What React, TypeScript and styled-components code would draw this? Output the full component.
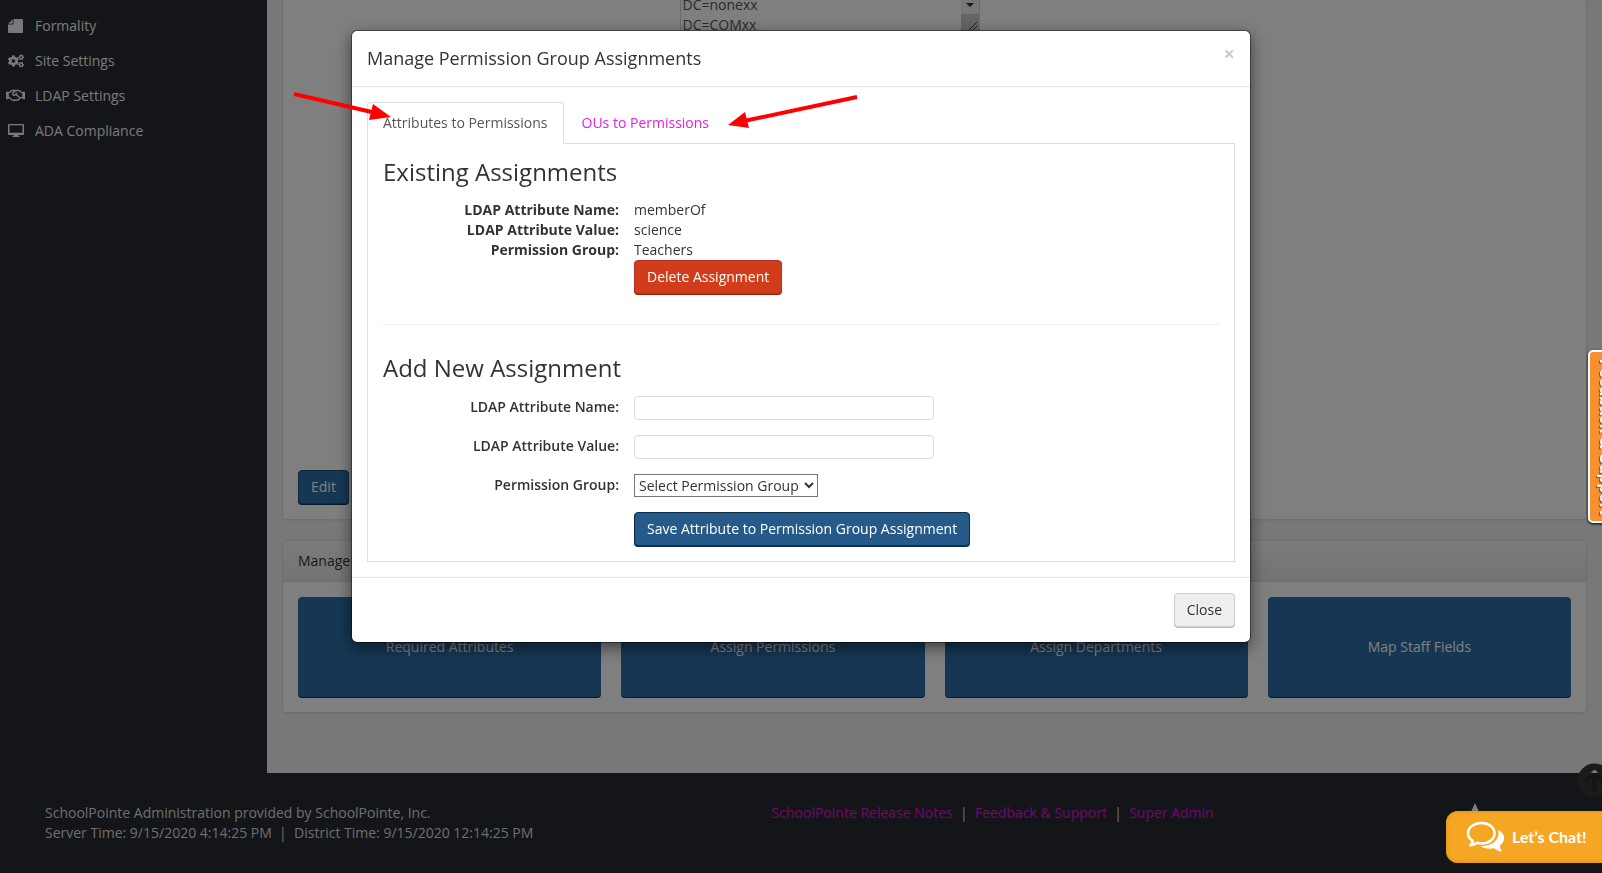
import React from "react";
import styled, { createGlobalStyle, css } from "styled-components";
import { FaCogs, FaRegHandshake, FaArrowCircleUp } from "react-icons/fa";

const GlobalStyle = createGlobalStyle`
  *, *::before, *::after { box-sizing: border-box; }
  html { overflow: hidden; }
  body {
    margin: 0;
    font: 14px/20px "Open Sans", "Noto Sans", sans-serif;
    color: #333;
    background: #272a30;
  }
  button, input, select, textarea { font: inherit; }
`;

const Page = styled.div`
  display: flex;
  flex-direction: column;
  min-height: 100vh;
`;

const Columns = styled.div`
  display: flex;
  flex: 1;
`;

const Sidebar = styled.nav`
  flex: 0 0 267px;
  padding-top: 8px;
  background: #272a30;
`;

const NavLink = styled.a`
  display: flex;
  align-items: center;
  gap: 10px;
  height: 35px;
  padding-left: 6px;
  color: #f2f2f2;
  text-decoration: none;
`;

const NavIcon = styled.span`
  display: flex;
  justify-content: center;
  width: 19px;
`;

const Main = styled.main`
  flex: 1;
  display: flex;
  flex-direction: column;
  gap: 20px;
  padding: 0 15px 60px;
  background: #f0f0f0;
`;

const Card = styled.section<{ $open?: boolean }>`
  border: 1px solid #dedede;
  border-radius: 4px;
  background: #fff;
  box-shadow: 0 1px 1px rgba(0, 0, 0, 0.05);
  ${(p) =>
    p.$open &&
    css`
      flex: 1;
      display: flex;
      flex-direction: column;
      justify-content: space-between;
      align-items: flex-start;
      padding: 0 15px 15px;
      border-top: 0;
      border-radius: 0 0 4px 4px;
    `}
`;

const CardHeader = styled.header`
  padding: 10px 15px;
  border-bottom: 1px solid #dedede;
  background: linear-gradient(#f8f8f8, #e6e6e6);
`;

const TileGrid = styled.div`
  display: grid;
  grid-template-columns: repeat(4, 1fr);
  gap: 20px;
  padding: 15px;
`;

const tones = {
  primary: ["#2c6ea6", "#214f78", "#0b2f50", "#fff"],
  active: ["#265a88", "#0d2d4a", "#0b2f50", "#fff"],
  danger: ["#d13c1a", "#b92c28", "#a02008", "#fff"],
  plain: ["#eee", "#ccc", "#c2c2c2", "#333"],
};

const Button = styled.button<{ $tone: keyof typeof tones }>`
  padding: 6px 12px;
  border: 1px solid ${(p) => tones[p.$tone][1]};
  border-radius: 4px;
  background: ${(p) => tones[p.$tone][0]};
  box-shadow: 0 1px 0 ${(p) => tones[p.$tone][2]};
  color: ${(p) => tones[p.$tone][3]};
  white-space: nowrap;
`;

const Tile = styled(Button)`
  height: 100px;
  border-color: #2c6ea6;
`;

const ValueBox = styled.div`
  display: flex;
  align-items: stretch;
  align-self: center;
  width: 300px;
  height: 32px;
  margin-right: 210px;
  border: 1px solid #d4d4d4;
  border-top: 0;
  overflow: hidden;
`;

const ValueText = styled.textarea`
  flex: 1;
  align-self: flex-end;
  height: 36px;
  padding: 0 2px;
  border: 0;
  background: transparent;
  color: #555;
  resize: none;
  overflow: hidden;
`;

const Footer = styled.footer`
  display: grid;
  grid-template-columns: 21fr 20fr 4fr;
  min-height: 100px;
  padding: 30px 0 30px 45px;
  color: #ddd;
  background: #272a30;
  white-space: pre-wrap;

  a {
    color: #e010d8;
    text-decoration: none;
  }
`;

const Overlay = styled.div`
  position: fixed;
  inset: 0;
  padding: 30px 0;
  background: rgba(0, 0, 0, 0.5);
`;

const Dialog = styled.div`
  position: relative;
  max-width: 900px;
  margin: 0 auto;
  border: 1px solid rgba(0, 0, 0, 0.4);
  border-radius: 6px;
  background: #fff;
  background-clip: padding-box;
  box-shadow: 0 5px 15px rgba(0, 0, 0, 0.5);
`;

const DialogHeader = styled.header`
  display: flex;
  justify-content: space-between;
  align-items: flex-start;
  padding: 15px;
  border-bottom: 1px solid #e5e5e5;
`;

const DialogTitle = styled.h4`
  margin: 0;
  font-size: 18px;
  font-weight: 400;
  line-height: 25px;
`;

const Dismiss = styled.button`
  padding: 0;
  border: 0;
  background: none;
  color: #ccc;
  font-size: 20px;
  font-weight: 700;
  line-height: 16px;
`;

const DialogBody = styled.div`
  padding: 15px;
`;

const TabList = styled.div`
  display: flex;
  gap: 2px;
  border-bottom: 1px solid #ddd;
`;

const Tab = styled.button<{ $active?: boolean }>`
  margin-bottom: -1px;
  padding: 10px 15px;
  border: 1px solid transparent;
  border-radius: 4px 4px 0 0;
  background: none;
  color: #e61ee0;
  ${(p) =>
    p.$active &&
    css`
      border-color: #ddd #ddd #fff;
      background: #fff;
      color: #555;
    `}
`;

const TabPane = styled.div`
  padding: 15px;
  border: 1px solid #ddd;
  border-top: 0;
`;

const SectionTitle = styled.h3`
  margin: 0 0 15px;
  font-size: 24px;
  font-weight: 400;
  line-height: 26px;
`;

const Details = styled.dl`
  display: grid;
  grid-template-columns: 236px 1fr;
  column-gap: 15px;
  margin: 0;

  dt {
    font-weight: 700;
    text-align: right;
  }
  dd {
    margin: 0;
  }
`;

const Indented = styled.div`
  padding-left: 251px;
`;

const Rule = styled.hr`
  margin: 30px 0;
  border: 0;
  border-top: 1px solid #eee;
`;

const Field = styled.div`
  display: grid;
  grid-template-columns: 236px 1fr;
  column-gap: 15px;
  align-items: start;
  justify-items: start;
  margin-bottom: 15px;
`;

const Label = styled.label`
  justify-self: end;
  font-weight: 600;
  line-height: 22px;
`;

const TextInput = styled.input`
  width: 100%;
  max-width: 300px;
  height: 24px;
  padding: 0 6px;
  border: 1px solid #ddd;
  border-radius: 4px;
`;

const Select = styled.select`
  width: 184px;
  height: 23px;
  border: 1px solid #767676;
  border-radius: 0;
  background: #fff;
  color: #333;
`;

const DialogFooter = styled.footer`
  display: flex;
  justify-content: flex-end;
  padding: 15px;
  border-top: 1px solid #e5e5e5;
`;

const Arrows = styled.svg`
  position: absolute;
  top: 0;
  left: 0;
  width: 100%;
  height: 120px;
  overflow: visible;
  pointer-events: none;
`;

const BackToTop = styled.a`
  position: fixed;
  right: -10px;
  bottom: 75px;
  display: flex;
  color: #363636;
`;

const FeedbackTab = styled.button`
  position: fixed;
  top: 350px;
  right: -16px;
  width: 30px;
  height: 173px;
  padding: 0;
  border: 2px solid #fff;
  border-radius: 5px 0 0 5px;
  background: #f88f30;
  box-shadow: 0 1px 3px #000;
  color: #fff;
  font: 700 16px/20px "Liberation Sans", Arial, sans-serif;
  text-shadow: 1px 1px 1px rgba(0, 0, 0, 0.5);
  writing-mode: vertical-rl;
  white-space: nowrap;

  span {
    display: block;
    margin-right: -2px;
    margin-left: 2px;
  }
`;

const ChatButton = styled.button`
  position: fixed;
  right: -10px;
  bottom: 10px;
  display: flex;
  align-items: center;
  gap: 7px;
  width: 166px;
  height: 52px;
  padding: 0 0 0 20px;
  border: 0;
  border-radius: 12px;
  background: #f5a623;
  box-shadow: inset 0 0 3px 1px #e2951a;
  color: #fff;
  font: 700 16px/20px Lato, sans-serif;
  white-space: nowrap;
`;

const NoteIcon = () => (
  <svg width="15" height="14" viewBox="0 0 15 14" fill="currentColor">
    <path d="M5.500 0H14Q15 0 15 1V13Q15 14 14 14H1Q0 14 0 13V5.500H4Q5.500 5.500 5.500 4Z" />
    <path d="M4.700 0.200V3.700Q4.700 4.700 3.700 4.700H0.200Z" />
  </svg>
);

const MonitorIcon = () => (
  <svg width="16" height="13" viewBox="0 0 16 13" fill="currentColor">
    <path
      fillRule="evenodd"
      d="M1 0H15Q16 0 16 1V10Q16 11 15 11H10.500V12H11.500V13H4.500V12H5.500V11H1Q0 11 0 10V1Q0 0 1 0ZM1.500 1.300V8.700H14.500V1.300Z"
    />
  </svg>
);

const ChatIcon = () => (
  <svg width="39" height="32" viewBox="0 0 39 32">
    <path
      d="M15.500 2C23 2 28.500 6.500 28.500 12.200S23 22.400 15.500 22.400C13.800 22.400 12.200 22.200 10.800 21.700C9 23.200 7 24 4.500 24.200C5.800 22.900 6.500 21.600 6.600 19.700C3.800 17.900 2 15.300 2 12.200C2 6.500 8 2 15.500 2Z"
      fill="none"
      stroke="#fff"
      strokeWidth="2.600"
      strokeLinejoin="round"
    />
    <path
      d="M32.500 9C36 11 38.200 13.700 38.200 17C38.200 20 36.600 22.300 34 24.200C34.200 26.800 34.700 28.300 36 30.600C32.500 30.300 30.200 29 28 27.200C22.500 28.300 18 27.300 14.500 25.200C24 25.300 32.500 20.800 32.500 12Z"
      fill="#fff"
    />
  </svg>
);

const navItems = [
  { name: "Formality", icon: <NoteIcon /> },
  { name: "Site Settings", icon: <FaCogs size={16} /> },
  { name: "LDAP Settings", icon: <FaRegHandshake size={19} /> },
  { name: "ADA Compliance", icon: <MonitorIcon /> },
];

const tiles = ["Required Attributes", "Assign Permissions", "Assign Departments", "Map Staff Fields"];

export default function App() {
  return (
    <>
      <GlobalStyle />
      <Page>
        <Columns>
          <Sidebar>
            {navItems.map((item) => (
              <NavLink href="#" key={item.name}>
                <NavIcon>{item.icon}</NavIcon>
                {item.name}
              </NavLink>
            ))}
          </Sidebar>
          <Main>
            <Card $open>
              <ValueBox>
                <ValueText aria-label="Search base" readOnly defaultValue={"DC=nonexx\nDC=COMxx"} />
                <svg width="18" height="32" viewBox="0 0 18 32">
                  <path d="M0 0H18V14H0Z" fill="#f0f0f0" />
                  <path d="M0 14H18V32H0Z" fill="#c8c8c8" />
                  <path d="M5 3H13L9 7Z" fill="#333" />
                  <path d="M8 30L16 22M12 30L16 26" stroke="#444" />
                </svg>
              </ValueBox>
              <Button type="button" $tone="primary">Edit</Button>
            </Card>
            <Card>
              <CardHeader>Manage</CardHeader>
              <TileGrid>
                {tiles.map((name) => (
                  <Tile type="button" $tone="primary" key={name}>{name}</Tile>
                ))}
              </TileGrid>
            </Card>
          </Main>
        </Columns>
        <Footer>
          <div>
            SchoolPointe Administration provided by SchoolPointe, Inc.
            <br />
            {"Server Time: 9/15/2020 4:14:25 PM  |  District Time: 9/15/2020 12:14:25 PM"}
          </div>
          <div>
            <a href="#">SchoolPointe Release Notes</a>
            {"  |  "}
            <a href="#">Feedback &amp; Support</a>
            {"  |  "}
            <a href="#">Super Admin</a>
          </div>
          <svg width="22" height="20" viewBox="0 0 22 20">
            <path d="M11 0L20 20H2Z" fill="#fff" />
          </svg>
        </Footer>
      </Page>
      <BackToTop href="#" aria-label="Back to top">
        <FaArrowCircleUp size={35} />
      </BackToTop>

      <Overlay>
        <Dialog role="dialog" aria-modal="true" aria-labelledby="dialog-title">
          <DialogHeader>
            <DialogTitle id="dialog-title">Manage Permission Group Assignments</DialogTitle>
            <Dismiss type="button" aria-label="Dismiss">×</Dismiss>
          </DialogHeader>
          <DialogBody>
            <TabList role="tablist">
              <Tab type="button" role="tab" aria-selected="true" $active>Attributes to Permissions</Tab>
              <Tab type="button" role="tab" aria-selected="false">OUs to Permissions</Tab>
            </TabList>
            <TabPane role="tabpanel">
              <SectionTitle>Existing Assignments</SectionTitle>
              <Details>
                <dt>LDAP Attribute Name:</dt>
                <dd>memberOf</dd>
                <dt>LDAP Attribute Value:</dt>
                <dd>science</dd>
                <dt>Permission Group:</dt>
                <dd>Teachers</dd>
              </Details>
              <Indented>
                <Button type="button" $tone="danger">Delete Assignment</Button>
              </Indented>
              <Rule />
              <SectionTitle>Add New Assignment</SectionTitle>
              <Field>
                <Label htmlFor="attribute-name">LDAP Attribute Name:</Label>
                <TextInput id="attribute-name" type="text" />
              </Field>
              <Field>
                <Label htmlFor="attribute-value">LDAP Attribute Value:</Label>
                <TextInput id="attribute-value" type="text" />
              </Field>
              <Field>
                <Label htmlFor="permission-group">Permission Group:</Label>
                <Select id="permission-group">
                  <option>Select Permission Group</option>
                </Select>
              </Field>
              <Indented>
                <Button type="button" $tone="active">Save Attribute to Permission Group Assignment</Button>
              </Indented>
            </TabPane>
          </DialogBody>
          <DialogFooter>
            <Button type="button" $tone="plain">Close</Button>
          </DialogFooter>
          <Arrows fill="#f00" stroke="#f00">
            <path d="M-58 63L24 82" strokeWidth="4" />
            <path d="M39 86L21 73L17 89Z" stroke="none" />
            <path d="M505 66L392 90" strokeWidth="4" />
            <path d="M376 94L393 81L397 97Z" stroke="none" />
          </Arrows>
        </Dialog>
      </Overlay>

      <FeedbackTab type="button">
        <span>Feedback &amp; Support</span>
      </FeedbackTab>
      <ChatButton type="button">
        <ChatIcon />
        Let’s Chat!
      </ChatButton>
    </>
  );
}
